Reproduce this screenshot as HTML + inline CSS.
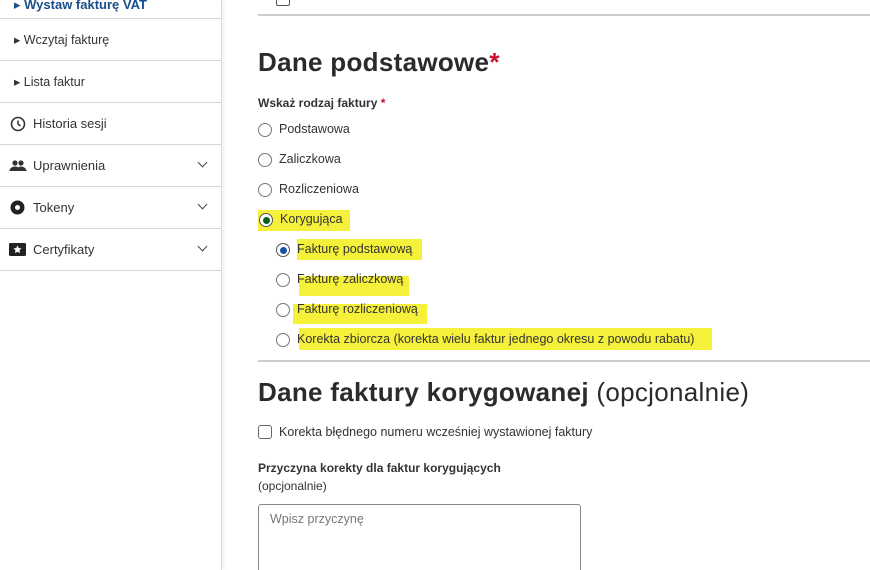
<!DOCTYPE html>
<html><head><meta charset="utf-8"><style>
*{margin:0;padding:0;box-sizing:border-box}
html,body{width:870px;height:570px;overflow:hidden}
body{background:#fff;font-family:"Liberation Sans","DejaVu Sans",sans-serif;color:#333;position:relative}
.a{position:absolute;white-space:nowrap}
.side{position:absolute;left:0;top:0;width:222px;height:570px;border-right:1px solid #ddd;box-shadow:2px 0 4px rgba(0,0,0,.06)}
.row{position:absolute;left:0;width:222px;height:42px;border-bottom:1.5px solid #d6d6d6;font-size:13px;color:#333}
.row span{position:absolute;top:13px}
.chev{position:absolute;right:16px;top:14px;width:7px;height:7px;border-right:1.6px solid #444;border-bottom:1.6px solid #444;transform:rotate(45deg)}
.r{position:absolute;width:14px;height:14px;border:1px solid #777;border-radius:50%;background:#fff}
.t{position:absolute;font-size:12.5px;color:#333;white-space:nowrap}
.hl{position:absolute;background:#f5f03a}
h1{position:absolute;font-size:26px;font-weight:bold;color:#2b2b2b;white-space:nowrap;letter-spacing:0.3px}
</style></head><body>
<div class="side">
  <div class="row" style="top:-23px"><span style="left:14px;font-weight:bold;color:#1a4e8a;top:20px">▸ Wystaw fakturę VAT</span></div>
  <div class="row" style="top:19px"><span style="left:14px;font-size:12.5px">▸ Wczytaj fakturę</span></div>
  <div class="row" style="top:61px"><span style="left:14px;font-size:12.5px">▸ Lista faktur</span></div>
  <div class="row" style="top:103px">
    <svg class="a" style="left:10px;top:13px" width="16" height="16" viewBox="0 0 16 16"><circle cx="8" cy="8" r="6.5" fill="none" stroke="#333" stroke-width="1.6"/><path d="M8 4.5V8l2.5 2" fill="none" stroke="#333" stroke-width="1.5"/></svg>
    <span style="left:33px">Historia sesji</span></div>
  <div class="row" style="top:145px">
    <svg class="a" style="left:9px;top:14px" width="18" height="14" viewBox="0 0 18 14"><circle cx="6" cy="4" r="2.6" fill="#333"/><circle cx="12" cy="4" r="2.6" fill="#333"/><path d="M0.5 12c0-3 3-4.5 5.5-4.5s5.5 1.5 5.5 4.5zM8 12c0-3 2-4.5 4-4.5s5.5 1.5 5.5 4.5z" fill="#333"/></svg>
    <span style="left:33px">Uprawnienia</span><div class="chev"></div></div>
  <div class="row" style="top:187px">
    <svg class="a" style="left:10px;top:13px" width="15" height="15" viewBox="0 0 15 15"><circle cx="7.5" cy="7.5" r="7" fill="#222"/><circle cx="7.5" cy="7.5" r="2.5" fill="#fff"/></svg>
    <span style="left:33px">Tokeny</span><div class="chev"></div></div>
  <div class="row" style="top:229px">
    <svg class="a" style="left:9px;top:14px" width="17" height="13" viewBox="0 0 17 13"><rect width="17" height="13" rx="1.5" fill="#222"/><path d="M8.5 2.5l1.3 2.6 2.8.3-2.1 1.9.6 2.8-2.6-1.4-2.6 1.4.6-2.8-2.1-1.9 2.8-.3z" fill="#fff"/></svg>
    <span style="left:33px">Certyfikaty</span><div class="chev"></div></div>
</div>

<div class="a" style="left:258px;top:14px;width:612px;height:1.5px;background:#ccc"></div>
<div class="a" style="left:276px;top:-8px;width:14px;height:14px;border:1.5px solid #555;border-radius:2px"></div>

<h1 style="left:258px;top:47px">Dane podstawowe<span style="color:#c8102e">*</span></h1>
<div class="t" style="left:258px;top:96px;font-weight:bold;font-size:12px">Wskaż rodzaj faktury <span style="color:#c8102e">*</span></div>

<div class="r" style="left:258px;top:123px"></div><div class="t" style="left:279px;top:122px">Podstawowa</div>
<div class="r" style="left:258px;top:153px"></div><div class="t" style="left:279px;top:152px">Zaliczkowa</div>
<div class="r" style="left:258px;top:183px"></div><div class="t" style="left:279px;top:182px">Rozliczeniowa</div>

<div class="hl" style="left:258px;top:210px;width:92px;height:21px"></div>
<div class="r" style="left:259px;top:213px;border-color:#555"></div><div class="a" style="left:262.5px;top:216.5px;width:7px;height:7px;border-radius:50%;background:#0b5e1a"></div>
<div class="t" style="left:280px;top:212px">Korygująca</div>

<div class="hl" style="left:297px;top:239px;width:125px;height:21px"></div>
<div class="r" style="left:276px;top:243px;border-color:#555"></div><div class="a" style="left:279.5px;top:246.5px;width:7px;height:7px;border-radius:50%;background:#1450a3"></div>
<div class="t" style="left:297px;top:242px">Fakturę podstawową</div>

<div class="hl" style="left:299px;top:276px;width:110px;height:20px"></div>
<div class="r" style="left:276px;top:273px"></div><div class="t" style="left:297px;top:272px">Fakturę zaliczkową</div>

<div class="hl" style="left:293px;top:304px;width:134px;height:20px"></div>
<div class="r" style="left:276px;top:303px"></div><div class="t" style="left:297px;top:302px">Fakturę rozliczeniową</div>

<div class="hl" style="left:299px;top:328px;width:413px;height:22px"></div>
<div class="r" style="left:276px;top:333px"></div><div class="t" style="left:297px;top:332px">Korekta zbiorcza (korekta wielu faktur jednego okresu z powodu rabatu)</div>

<div class="a" style="left:258px;top:360px;width:612px;height:1.5px;background:#ccc"></div>

<h1 style="left:258px;top:377px">Dane faktury korygowanej <span style="font-weight:normal">(opcjonalnie)</span></h1>

<div class="a" style="left:258px;top:425px;width:14px;height:14px;border:1px solid #666;border-radius:3px"></div>
<div class="t" style="left:279px;top:425px">Korekta błędnego numeru wcześniej wystawionej faktury</div>

<div class="t" style="left:258px;top:461px;font-weight:bold;font-size:12px">Przyczyna korekty dla faktur korygujących</div>
<div class="t" style="left:258px;top:479px;font-size:12px">(opcjonalnie)</div>
<div class="a" style="left:258px;top:504px;width:323px;height:90px;border:1px solid #888;border-radius:3px"></div>
<div class="t" style="left:270px;top:512px;color:#777">Wpisz przyczynę</div>
</body></html>
